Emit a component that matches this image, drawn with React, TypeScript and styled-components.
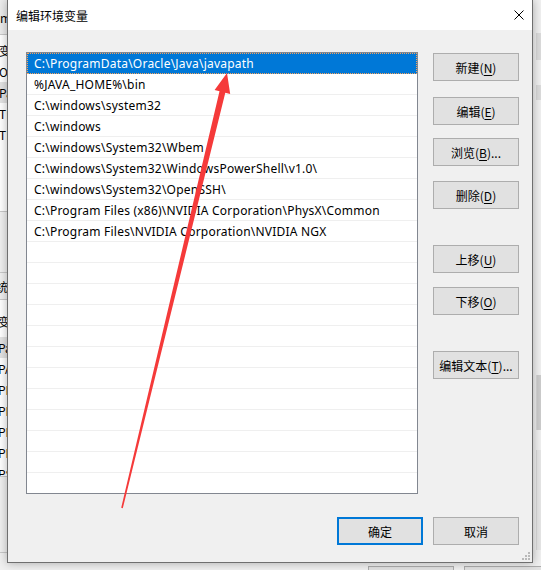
import React from "react";
import styled, { createGlobalStyle } from "styled-components";

const UI_FONT = `"Noto Sans", "Noto Sans CJK SC", sans-serif`;
const CJK_FONT = `"Noto Sans CJK SC", "Noto Sans", sans-serif`;

const Global = createGlobalStyle`
  html, body { margin: 0; padding: 0; background: #f0f0f0; }
  body { width: 541px; height: 570px; overflow: hidden; font-family: ${UI_FONT}; }
  * { box-sizing: border-box; }
`;

const Desktop = styled.div`
  position: relative;
  width: 541px;
  height: 570px;
  display: grid;
  grid-template-columns: 7px 526px 8px;
  grid-template-rows: 563px 7px;
  background: #f0f0f0;
  overflow: hidden;
`;

/* ---------- background window peeking out ---------- */
const LeftPeek = styled.div`
  grid-column: 1;
  grid-row: 1;
  display: flex;
  flex-direction: column;
  overflow: hidden;
  font-family: ${CJK_FONT};
  font-size: 12px;
  color: #000;
`;

const PeekBand = styled.div<{ $h: number; $bg: string; $pad?: number }>`
  height: ${(p) => p.$h}px;
  flex: none;
  background: ${(p) => p.$bg};
  border-bottom: 1px solid #c9c9c9;
  padding-top: ${(p) => p.$pad ?? 0}px;
  overflow: hidden;
  display: flex;
  flex-direction: column;
`;

const PeekRow = styled.div<{ $h?: number; $shift?: number; $hl?: boolean; $gap?: number }>`
  height: ${(p) => p.$h ?? 21}px;
  line-height: ${(p) => p.$h ?? 21}px;
  flex: none;
  white-space: nowrap;
  margin-left: ${(p) => p.$shift ?? 0}px;
  margin-bottom: ${(p) => p.$gap ?? 0}px;
  background: ${(p) => (p.$hl ? "#e3e3e3" : "transparent")};
`;

const RightPeek = styled.div`
  grid-column: 3;
  grid-row: 1;
  display: flex;
  flex-direction: column;
  padding-left: 3px;
  overflow: hidden;
`;

const TrackPiece = styled.div<{ $top: number; $h: number; $bg: string }>`
  margin-top: ${(p) => p.$top}px;
  height: ${(p) => p.$h}px;
  flex: none;
  background: ${(p) => p.$bg};
  border-left: 1px solid #d9d9d9;
`;

const BottomPeek = styled.div`
  grid-column: 1 / span 3;
  grid-row: 2;
  display: flex;
  gap: 10px;
  padding-left: 368px;
  padding-top: 3px;
  overflow: hidden;
`;

const PeekButton = styled.div`
  width: 86px;
  height: 20px;
  flex: none;
  border: 1px solid #adadad;
  background: #e1e1e1;
`;

/* ---------- dialog ---------- */
const Dialog = styled.div`
  grid-column: 2;
  grid-row: 1;
  position: relative;
  z-index: 1;
  background: #f0f0f0;
  border: 1px solid #6f6f6f;
  border-top: none;
  box-shadow: 0 0 9px rgba(0, 0, 0, 0.3);
  display: flex;
  flex-direction: column;
`;

const TitleBar = styled.div`
  height: 30px;
  flex: none;
  background: #ffffff;
  display: flex;
  align-items: center;
  justify-content: space-between;
  padding: 0 8px 0 8px;
  font-family: ${CJK_FONT};
  font-size: 12px;
  color: #000;
`;

const CloseGlyph = styled.svg`
  width: 10px;
  height: 10px;
  display: block;
`;

const Content = styled.div`
  display: grid;
  grid-template-columns: 392px 86px;
  column-gap: 15px;
  padding: 22px 0 0 18px;
`;

const ListBox = styled.div`
  height: 442px;
  border: 1px solid #828790;
  background: #ffffff;
  overflow: hidden;
  display: flex;
  flex-direction: column;
`;

const ListRow = styled.div<{ $selected?: boolean }>`
  height: 21px;
  flex: none;
  padding: 2px 0 0 7px;
  line-height: 18px;
  font-family: ${UI_FONT};
  font-size: 12px;
  letter-spacing: 0.22px;
  white-space: nowrap;
  color: ${(p) => (p.$selected ? "#ffffff" : "#000000")};
  background: ${(p) => (p.$selected ? "#0078d7" : "#ffffff")};
  border-bottom: 1px solid ${(p) => (p.$selected ? "#0078d7" : "#efefef")};
  outline: ${(p) => (p.$selected ? "1px dotted #f7a35c" : "none")};
  outline-offset: -1px;
`;

const ButtonColumn = styled.div`
  display: flex;
  flex-direction: column;
`;

const Button = styled.button<{ $top?: number; $primary?: boolean }>`
  width: 86px;
  height: 28px;
  flex: none;
  margin: ${(p) => p.$top ?? 0}px 0 0 0;
  padding: 0;
  border: ${(p) => (p.$primary ? "2px solid #0078d7" : "1px solid #adadad")};
  background: #e1e1e1;
  font-family: ${CJK_FONT};
  font-size: 12px;
  color: #000;
  display: flex;
  align-items: center;
  justify-content: center;
  cursor: default;

  u {
    text-decoration: underline;
    text-underline-offset: 2px;
  }
`;

const Footer = styled.div`
  display: flex;
  justify-content: flex-end;
  gap: 10px;
  margin-top: 23px;
  padding-right: 13px;
`;

const Grip = styled.svg`
  position: absolute;
  right: 2px;
  bottom: 2px;
  width: 9px;
  height: 9px;
`;

const ArrowLayer = styled.svg`
  position: absolute;
  left: 0;
  top: 0;
  width: 541px;
  height: 570px;
  z-index: 5;
  pointer-events: none;
`;

const paths = [
  "C:\\ProgramData\\Oracle\\Java\\javapath",
  "%JAVA_HOME%\\bin",
  "C:\\windows\\system32",
  "C:\\windows",
  "C:\\windows\\System32\\Wbem",
  "C:\\windows\\System32\\WindowsPowerShell\\v1.0\\",
  "C:\\windows\\System32\\OpenSSH\\",
  "C:\\Program Files (x86)\\NVIDIA Corporation\\PhysX\\Common",
  "C:\\Program Files\\NVIDIA Corporation\\NVIDIA NGX",
];

const rows = [...paths, ...Array.from({ length: 13 }, () => "")];

export default function App() {
  return (
    <>
      <Global />
      <Desktop>
        <LeftPeek>
          <PeekBand $h={35} $bg="#ececec" $pad={7}>
            <PeekRow>m</PeekRow>
          </PeekBand>
          <PeekBand $h={177} $bg="#ffffff" $pad={5}>
            <PeekRow $shift={-1}>变量</PeekRow>
            <PeekRow $shift={-1}>OneDrive</PeekRow>
            <PeekRow $shift={-1} $hl>Path</PeekRow>
            <PeekRow $shift={-1}>TEMP</PeekRow>
            <PeekRow $shift={-1}>TMP</PeekRow>
          </PeekBand>
          <PeekBand $h={61} $bg="#f0f0f0" />
          <PeekBand $h={27} $bg="#f0f0f0" $pad={5}>
            <PeekRow $shift={-16} $h={17}>系统变量</PeekRow>
          </PeekBand>
          <PeekBand $h={177} $bg="#ffffff" $pad={11}>
            <PeekRow $shift={-2} $h={22} $gap={4}>变量</PeekRow>
            <PeekRow $shift={-2} $hl>Path</PeekRow>
            <PeekRow $shift={-2}>PATHEXT</PeekRow>
            <PeekRow $shift={-2}>PROCESSOR_ARCHITECTURE</PeekRow>
            <PeekRow $shift={-2}>PROCESSOR_IDENTIFIER</PeekRow>
            <PeekRow $shift={-2}>PROCESSOR_LEVEL</PeekRow>
            <PeekRow $shift={-2}>PROCESSOR_REVISION</PeekRow>
            <PeekRow $shift={-2}>PSModulePath</PeekRow>
          </PeekBand>
          <PeekBand $h={76} $bg="#f0f0f0" />
        </LeftPeek>

        <Dialog>
          <TitleBar>
            <span>编辑环境变量</span>
            <CloseGlyph viewBox="0 0 10 10">
              <path d="M0.5 0.5 L9.5 9.5 M9.5 0.5 L0.5 9.5" stroke="#000" strokeWidth="1" fill="none" />
            </CloseGlyph>
          </TitleBar>
          <Content>
            <ListBox>
              {rows.map((r, i) => (
                <ListRow key={i} $selected={i === 0}>
                  {r}
                </ListRow>
              ))}
            </ListBox>
            <ButtonColumn>
              <Button $top={1}>新建(<u>N</u>)</Button>
              <Button $top={16}>编辑(<u>E</u>)</Button>
              <Button $top={13}>浏览(<u>B</u>)...</Button>
              <Button $top={15}>删除(<u>D</u>)</Button>
              <Button $top={36}>上移(<u>U</u>)</Button>
              <Button $top={14}>下移(<u>O</u>)</Button>
              <Button $top={36}>编辑文本(<u>T</u>)...</Button>
            </ButtonColumn>
          </Content>
          <Footer>
            <Button $primary>确定</Button>
            <Button>取消</Button>
          </Footer>
          <Grip viewBox="0 0 9 9">
            <rect x="7" y="1" width="2" height="2" fill="#b9b9b9" />
            <rect x="4" y="4" width="2" height="2" fill="#b9b9b9" />
            <rect x="7" y="4" width="2" height="2" fill="#b9b9b9" />
            <rect x="1" y="7" width="2" height="2" fill="#b9b9b9" />
            <rect x="4" y="7" width="2" height="2" fill="#b9b9b9" />
            <rect x="7" y="7" width="2" height="2" fill="#b9b9b9" />
          </Grip>
        </Dialog>

        <RightPeek>
          <TrackPiece $top={33} $h={27} $bg="#dcdcdc" />
          <TrackPiece $top={25} $h={15} $bg="#dcdcdc" />
          <TrackPiece $top={275} $h={55} $bg="#cdcdcd" />
          <TrackPiece $top={20} $h={100} $bg="#e6e6e6" />
        </RightPeek>

        <BottomPeek>
          <PeekButton />
          <PeekButton />
        </BottomPeek>

        <ArrowLayer viewBox="0 0 541 570">
          <polygon
            points="121.2,507.8 219.5,91.3 214.6,90.1 227,73 230.2,93.9 225.3,92.7 122.8,508.2"
            fill="#f53a3a"
          />
        </ArrowLayer>
      </Desktop>
    </>
  );
}
